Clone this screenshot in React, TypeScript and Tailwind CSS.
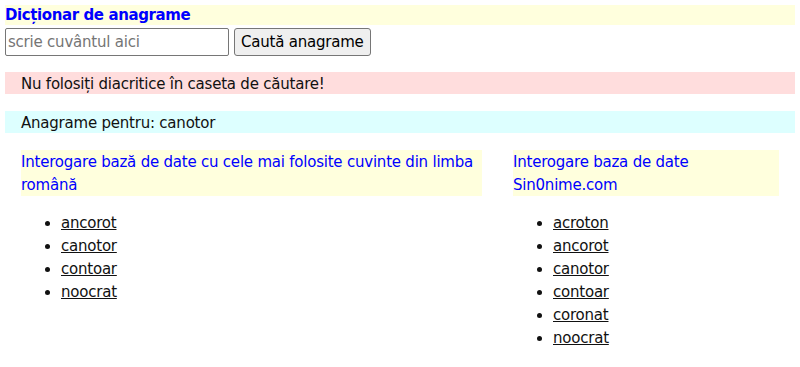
import React from "react";

const left = ["ancorot", "canotor", "contoar", "noocrat"];
const right = ["acroton", "ancorot", "canotor", "contoar", "coronat", "noocrat"];

function List({ items }: { items: string[] }) {
  return (
    <ul className="list-disc pl-[40px] mt-[16px] text-[15px] leading-[23px] text-[#111]">
      {items.map((w) => (
        <li key={w}>
          <a href="#" className="underline text-[#111]">{w}</a>
        </li>
      ))}
    </ul>
  );
}

export default function App() {
  return (
    <div className="w-[800px] h-[367px] bg-white px-[5px] pt-[5px] text-[15px] tracking-[-0.22px]" style={{ fontFamily: '"DejaVu Sans", Verdana, sans-serif' }}>
      <div className="bg-[#ffffdd] h-[20px] leading-[21px] font-bold text-[#0000ff] text-[15px] tracking-[-0.4px]">Dicționar de anagrame</div>
      <div className="flex items-center gap-[5px] mt-[3px] h-[28px]">
        <input
          placeholder="scrie cuvântul aici"
          className="w-[224px] h-[28px] border border-[#767676] rounded-[2px] px-[2px] text-[15px] tracking-[-0.22px] placeholder:text-[#757575]"
          style={{ fontFamily: '"DejaVu Sans", Verdana, sans-serif' }}
        />
        <button className="h-[28px] px-[6px] border border-[#767676] rounded-[3px] bg-[#efefef] text-[15px] text-black tracking-[-0.22px]">Caută anagrame</button>
      </div>
      <div className="mt-[16px] bg-[#ffdddd] h-[22px] leading-[22px] pt-[1px] pl-[16px] text-[#111]">Nu folosiți diacritice în caseta de căutare!</div>
      <div className="mt-[17px] bg-[#ddffff] h-[22px] leading-[22px] pt-[1px] pl-[16px] text-[#111]">Anagrame pentru: canotor</div>
      <div className="flex pl-[16px] mt-[17px]">
        <div className="w-[461px]">
          <div className="bg-[#ffffdd] text-[#0000ff] leading-[22.5px] pt-[1px]">Interogare bază de date cu cele mai folosite cuvinte din limba română</div>
          <List items={left} />
        </div>
        <div className="w-[266px] ml-[31px]">
          <div className="bg-[#ffffdd] text-[#0000ff] leading-[22.5px] pt-[1px]">Interogare baza de date Sin0nime.com</div>
          <List items={right} />
        </div>
      </div>
    </div>
  );
}
